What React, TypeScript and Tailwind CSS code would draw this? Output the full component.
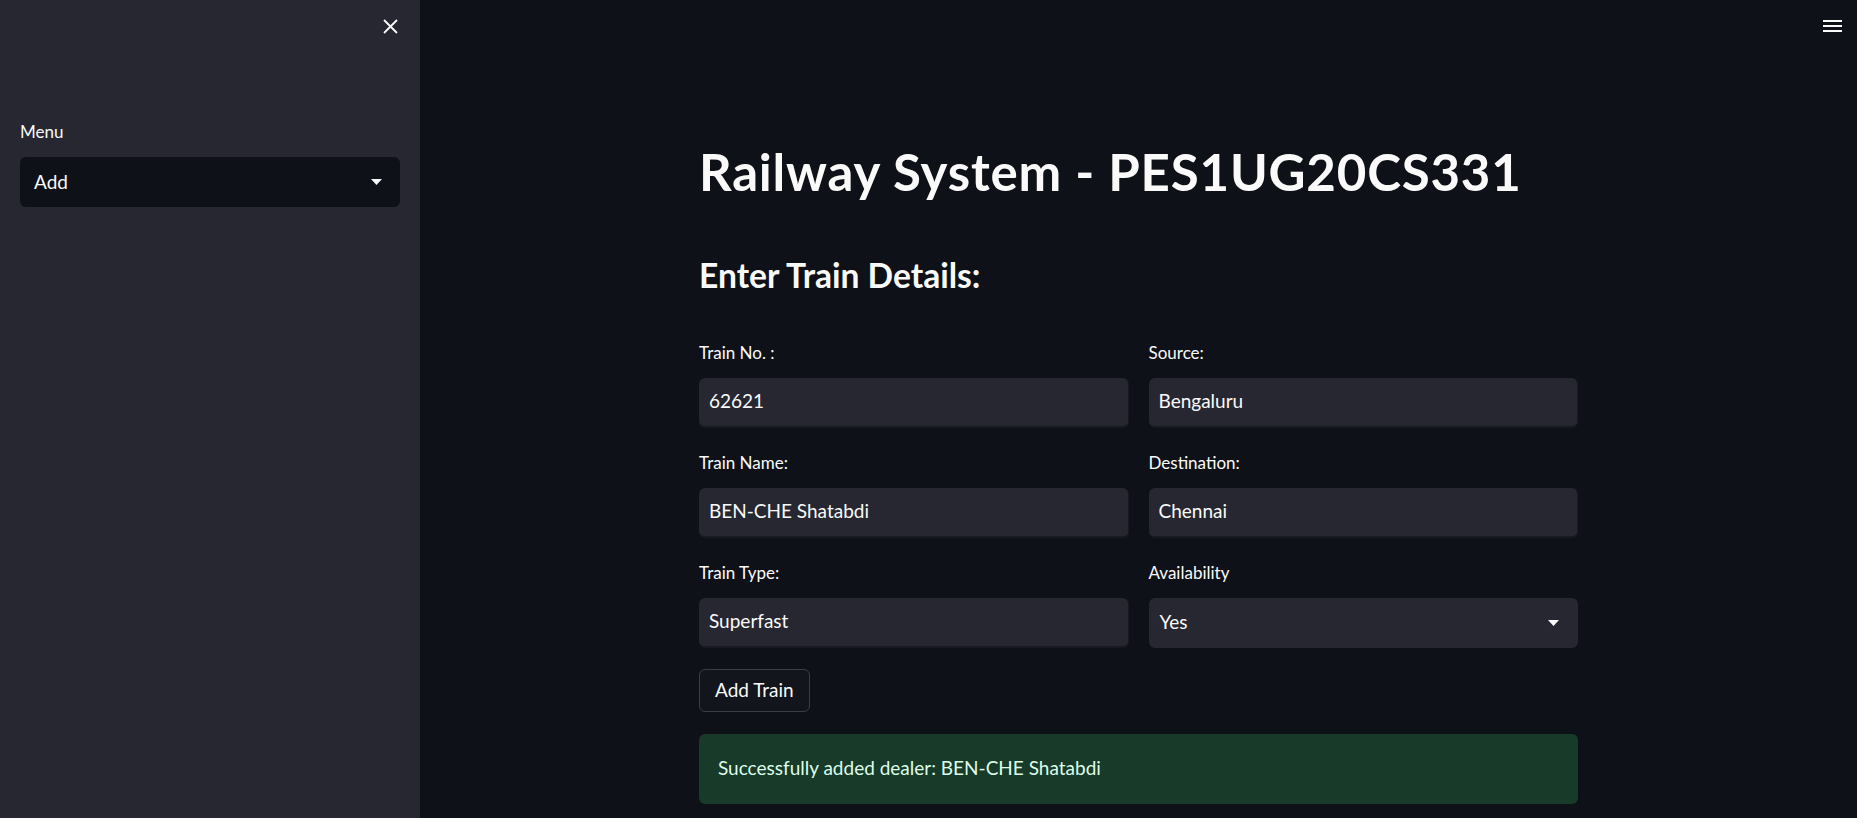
import React from "react";

const font = { fontFamily: "Lato, 'Noto Sans', sans-serif" };

const Caret = () => (
  <svg width="11" height="6" viewBox="0 0 11 6" className="shrink-0">
    <path d="M0 0h11L5.5 6z" fill="#fafafa" />
  </svg>
);

const TextInput = ({ label, value }: { label: string; value: string }) => (
  <div className="flex flex-col">
    <label className="text-[17px] leading-none text-[#fafafa] mb-[17px]">{label}</label>
    <div className="h-[50px] rounded-[6px] bg-[#262730] border-b-2 border-r border-[#191a21] flex items-center px-[10px] text-[19px] text-[#fafafa]">
      {value}
    </div>
  </div>
);

const SelectInput = ({ label, value }: { label: string; value: string }) => (
  <div className="flex flex-col">
    <label className="text-[17px] leading-none text-[#fafafa] mb-[17px]">{label}</label>
    <div className="h-[50px] rounded-[6px] bg-[#262730] flex items-center justify-between pl-[11px] pr-[19px] text-[19px] text-[#fafafa]">
      <span>{value}</span>
      <Caret />
    </div>
  </div>
);

export default function App() {
  return (
    <div className="flex w-full h-[818px] overflow-hidden bg-[#0e1117]" style={font}>
      {/* sidebar */}
      <aside className="w-[420px] shrink-0 h-full bg-[#262730] px-[20px] flex flex-col">
        <div className="flex justify-end pt-[19px] pr-[2px]">
          <svg width="15" height="15" viewBox="0 0 15 15">
            <path d="M1 1l13 13M14 1L1 14" stroke="#fafafa" strokeWidth="1.8" />
          </svg>
        </div>
        <label className="mt-[89px] text-[17px] leading-none text-[#fafafa]">Menu</label>
        <div className="mt-[17px] h-[50px] rounded-[6px] bg-[#0e1117] flex items-center justify-between pl-[14px] pr-[18px] text-[19px] text-[#fafafa]">
          <span>Add</span>
          <Caret />
        </div>
      </aside>

      {/* main */}
      <main className="flex-1 relative">
        <div className="absolute top-[20px] right-[15px] flex flex-col gap-[3px]">
          <span className="block w-[19px] h-[2px] bg-[#fafafa]" />
          <span className="block w-[19px] h-[2px] bg-[#fafafa]" />
          <span className="block w-[19px] h-[2px] bg-[#fafafa]" />
        </div>

        <div className="max-w-[879px] mx-auto pt-[146px] flex flex-col">
          <h1 className="text-[51px] leading-none font-bold tracking-[0.8px] text-[#fafafa]">
            Railway System - PES1UG20CS331
          </h1>
          <h3 className="mt-[62px] text-[33.6px] leading-none font-bold text-[#fafafa]">
            Enter Train Details:
          </h3>

          <div className="mt-[51px] grid grid-cols-2 gap-x-[20px] gap-y-[26px]">
            <TextInput label="Train No. :" value="62621" />
            <TextInput label="Source:" value="Bengaluru" />
            <TextInput label="Train Name:" value="BEN-CHE Shatabdi" />
            <TextInput label="Destination:" value="Chennai" />
            <TextInput label="Train Type:" value="Superfast" />
            <SelectInput label="Availability" value="Yes" />
          </div>

          <div className="mt-[21px]">
            <button className="h-[43px] px-[15px] rounded-[6px] border border-[#3b3d44] bg-[#12151c] text-[19px] text-[#fafafa]">
              Add Train
            </button>
          </div>

          <div className="mt-[22px] h-[70px] rounded-[6px] bg-[#173a29] flex items-center px-[19px] text-[19px] text-[#dffde9]">
            Successfully added dealer: BEN-CHE Shatabdi
          </div>
        </div>
      </main>
    </div>
  );
}
